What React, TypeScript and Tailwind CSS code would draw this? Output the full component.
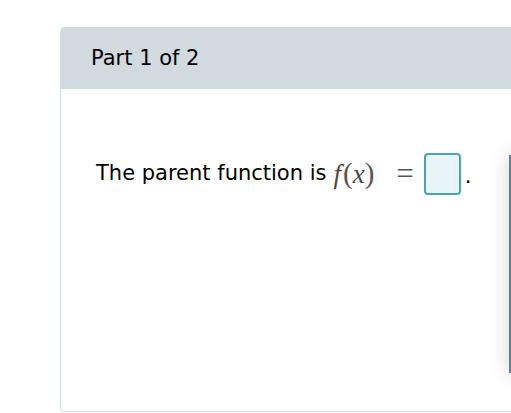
import React from "react";

export default function App() {
  return (
    <div className="relative h-[413px] w-[511px] overflow-hidden bg-white" style={{ fontFamily: '"DejaVu Sans", Verdana, sans-serif' }}>
      <div className="pt-[27px] pl-[60px]">
        <div className="flex h-[385px] w-[520px] flex-col overflow-hidden rounded-[4px] border border-[#d3dce0] bg-white">
          <div className="flex h-[61px] items-center bg-[#d1dade] pl-[30px] text-[21px] text-black">
            Part 1 of 2
          </div>
          <div className="mt-[63px] flex h-[44px] items-center pl-[35px] text-[21px] text-black">
            <span>The parent function is</span>
            <span className="ml-[7px] flex items-center text-[#484848]" style={{ fontFamily: '"Liberation Serif", "Times New Roman", serif' }}>
              <span className="text-[27px] italic">f</span>
              <span className="ml-[2px] text-[29px] text-[#555]">(</span>
              <span className="text-[27px] italic">x</span>
              <span className="text-[29px] text-[#555]">)</span>
              <span className="ml-[22px] text-[31px] text-[#555]">=</span>
            </span>
            <span className="ml-[10px] h-[42px] w-[37px] rounded-[4px] border-2 border-[#4fa2b2] bg-[#e6f4f8]" />
            <span className="ml-[4px] self-end pb-[4px]">.</span>
          </div>
        </div>
      </div>
      <div className="absolute left-[509px] top-[155px] h-[218px] w-[100px] bg-[#5f808a] shadow-[0_0_18px_rgba(0,0,0,0.18)]" />
    </div>
  );
}
